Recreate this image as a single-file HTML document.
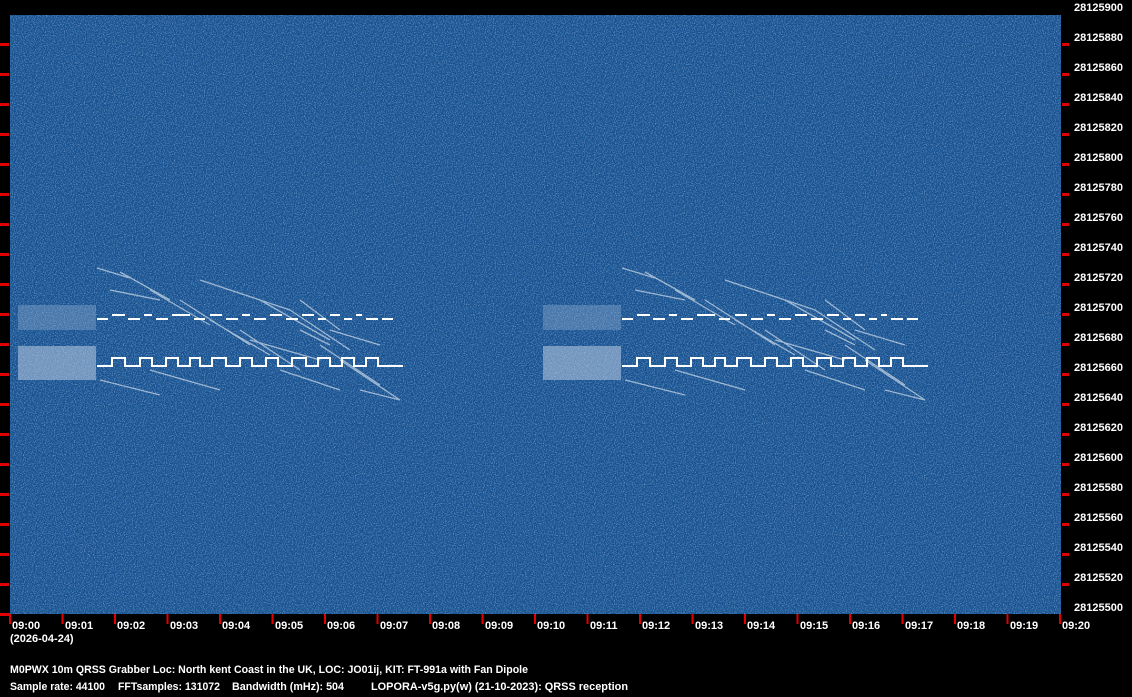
<!DOCTYPE html>
<html><head><meta charset="utf-8"><style>
html,body{margin:0;padding:0;background:#000;width:1132px;height:697px;overflow:hidden}
svg{display:block}
text{font-family:"Liberation Sans",sans-serif;font-weight:bold;font-size:11px;fill:#fff}
</style></head><body>
<svg width="1132" height="697" viewBox="0 0 1132 697">
<defs>
<filter id="n" x="0" y="0" width="100%" height="100%">
<feTurbulence type="fractalNoise" baseFrequency="0.9" numOctaves="2" seed="3"/>
<feColorMatrix type="matrix" values="0 0 0 0 0.45  0 0 0 0 0.65  0 0 0 0 0.95  1.4 0 0 0 -0.62"/>
</filter>
<g id="sig" stroke="#fff" fill="none">
 <rect x="18" y="305" width="78" height="25" fill="#9fb8d8" stroke="none" opacity="0.35"/>
 <rect x="18" y="346" width="78" height="34" fill="#c8d6ea" stroke="none" opacity="0.5"/>
 <g stroke-width="2">
 <path d="M97 319H108M112 315H125M128 319H140M144 315H152M156 319H168M172 315H190M194 319H205M210 315H222M226 319H238M242 315H250M254 319H266M270 315H282M286 319H298M302 315H314M318 319H326M330 315H340M344 319H352M356 315H362M366 319H378M382 319H393"/>
 <path d="M97 366H112V358H125V366H140V358H152V366H166V358H178V366H190V358H200V366H212V358H226V366H240V358H252V366H266V358H278V366H292V358H306V366H318V358H330V366H342V358H354V366H366V358H378V366H392V366H403"/>
 </g>
 <g stroke-width="1.3" opacity="0.55">
 <path d="M97 268L130 278M120 272L170 300M150 290L210 325M180 300L250 345M210 320L270 355M240 330L300 370M260 300L330 340M290 310L350 350M300 300L340 330M320 345L380 385M340 360L400 400M100 380L160 395M110 290L160 300M200 280L260 300M230 290L290 310M250 340L320 360M330 330L380 345M280 370L340 390M360 390L400 400M150 370L220 390M300 330L330 345"/>
 </g>
</g>
</defs>
<rect x="10" y="15" width="1051" height="599" fill="#17518f"/>
<rect x="10" y="15" width="1051" height="599" fill="#fff" filter="url(#n)"/>
<use href="#sig"/>
<use href="#sig" x="525"/>
<g fill="#e00000">
<rect x="0" y="43" width="9" height="3"/><rect x="0" y="73" width="9" height="3"/><rect x="0" y="103" width="9" height="3"/><rect x="0" y="133" width="9" height="3"/><rect x="0" y="163" width="9" height="3"/><rect x="0" y="193" width="9" height="3"/><rect x="0" y="223" width="9" height="3"/><rect x="0" y="253" width="9" height="3"/><rect x="0" y="283" width="9" height="3"/><rect x="0" y="313" width="9" height="3"/><rect x="0" y="343" width="9" height="3"/><rect x="0" y="373" width="9" height="3"/><rect x="0" y="403" width="9" height="3"/><rect x="0" y="433" width="9" height="3"/><rect x="0" y="463" width="9" height="3"/><rect x="0" y="493" width="9" height="3"/><rect x="0" y="523" width="9" height="3"/><rect x="0" y="553" width="9" height="3"/><rect x="0" y="583" width="9" height="3"/>
<rect x="1062" y="43" width="7" height="3"/><rect x="1062" y="73" width="7" height="3"/><rect x="1062" y="103" width="7" height="3"/><rect x="1062" y="133" width="7" height="3"/><rect x="1062" y="163" width="7" height="3"/><rect x="1062" y="193" width="7" height="3"/><rect x="1062" y="223" width="7" height="3"/><rect x="1062" y="253" width="7" height="3"/><rect x="1062" y="283" width="7" height="3"/><rect x="1062" y="313" width="7" height="3"/><rect x="1062" y="343" width="7" height="3"/><rect x="1062" y="373" width="7" height="3"/><rect x="1062" y="403" width="7" height="3"/><rect x="1062" y="433" width="7" height="3"/><rect x="1062" y="463" width="7" height="3"/><rect x="1062" y="493" width="7" height="3"/><rect x="1062" y="523" width="7" height="3"/><rect x="1062" y="553" width="7" height="3"/><rect x="1062" y="583" width="7" height="3"/>
<rect x="0" y="613" width="10" height="3"/>
</g>
<g fill="#e00000">
<rect x="9" y="614" width="2" height="10"/><rect x="61.5" y="614" width="2" height="10"/><rect x="114" y="614" width="2" height="10"/><rect x="166.5" y="614" width="2" height="10"/><rect x="219" y="614" width="2" height="10"/><rect x="271.5" y="614" width="2" height="10"/><rect x="324" y="614" width="2" height="10"/><rect x="376.5" y="614" width="2" height="10"/><rect x="429" y="614" width="2" height="10"/><rect x="481.5" y="614" width="2" height="10"/><rect x="534" y="614" width="2" height="10"/><rect x="586.5" y="614" width="2" height="10"/><rect x="639" y="614" width="2" height="10"/><rect x="691.5" y="614" width="2" height="10"/><rect x="744" y="614" width="2" height="10"/><rect x="796.5" y="614" width="2" height="10"/><rect x="849" y="614" width="2" height="10"/><rect x="901.5" y="614" width="2" height="10"/><rect x="954" y="614" width="2" height="10"/><rect x="1006.5" y="614" width="2" height="10"/><rect x="1059" y="614" width="2" height="10"/>
</g>
<g>
<text x="1074" y="11">28125900</text><text x="1074" y="41">28125880</text><text x="1074" y="71">28125860</text><text x="1074" y="101">28125840</text><text x="1074" y="131">28125820</text><text x="1074" y="161">28125800</text><text x="1074" y="191">28125780</text><text x="1074" y="221">28125760</text><text x="1074" y="251">28125740</text><text x="1074" y="281">28125720</text><text x="1074" y="311">28125700</text><text x="1074" y="341">28125680</text><text x="1074" y="371">28125660</text><text x="1074" y="401">28125640</text><text x="1074" y="431">28125620</text><text x="1074" y="461">28125600</text><text x="1074" y="491">28125580</text><text x="1074" y="521">28125560</text><text x="1074" y="551">28125540</text><text x="1074" y="581">28125520</text><text x="1074" y="611">28125500</text>
</g>
<g>
<text x="12" y="629">09:00</text><text x="65" y="629">09:01</text><text x="117" y="629">09:02</text><text x="170" y="629">09:03</text><text x="222" y="629">09:04</text><text x="275" y="629">09:05</text><text x="327" y="629">09:06</text><text x="380" y="629">09:07</text><text x="432" y="629">09:08</text><text x="485" y="629">09:09</text><text x="537" y="629">09:10</text><text x="590" y="629">09:11</text><text x="642" y="629">09:12</text><text x="695" y="629">09:13</text><text x="747" y="629">09:14</text><text x="800" y="629">09:15</text><text x="852" y="629">09:16</text><text x="905" y="629">09:17</text><text x="957" y="629">09:18</text><text x="1010" y="629">09:19</text><text x="1062" y="629">09:20</text>
<text x="10" y="642">(2026-04-24)</text>
<text x="10" y="673" textLength="518" lengthAdjust="spacingAndGlyphs">M0PWX 10m QRSS Grabber Loc: North kent Coast in the UK, LOC: JO01ij, KIT: FT-991a with Fan Dipole</text>
<text x="10" y="690" textLength="95" lengthAdjust="spacingAndGlyphs">Sample rate: 44100</text>
<text x="118" y="690" textLength="102" lengthAdjust="spacingAndGlyphs">FFTsamples: 131072</text>
<text x="232" y="690" textLength="112" lengthAdjust="spacingAndGlyphs">Bandwidth (mHz): 504</text>
<text x="371" y="690" textLength="257" lengthAdjust="spacingAndGlyphs">LOPORA-v5g.py(w) (21-10-2023): QRSS reception</text>
</g>
</svg>
</body></html>
